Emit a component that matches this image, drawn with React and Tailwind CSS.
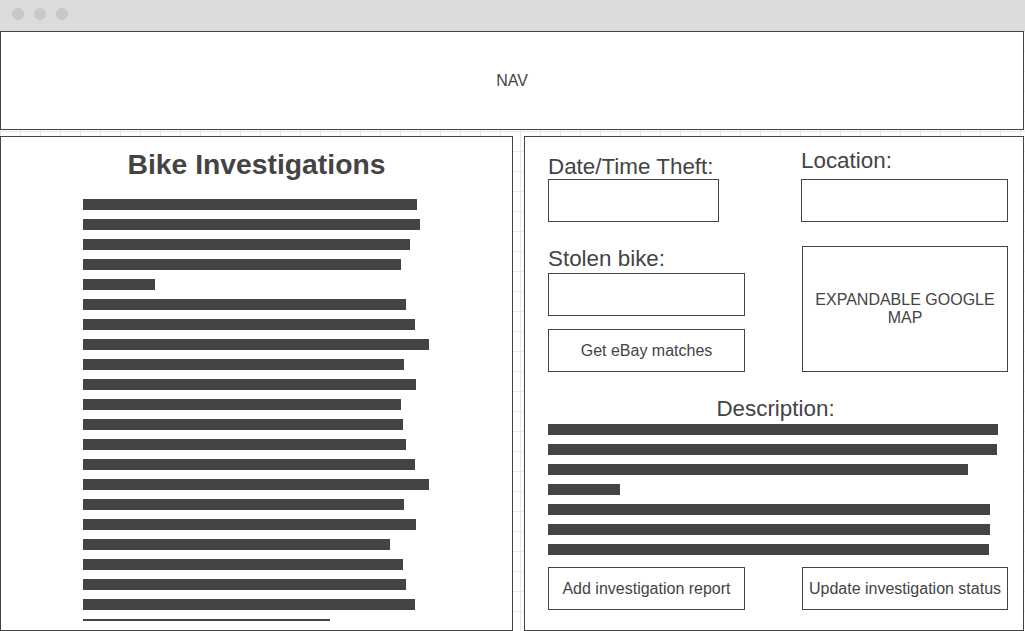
import React from "react";

const leftBars = [334, 337, 327, 318, 72, 323, 332, 346, 321, 333, 318, 320, 323, 332, 346, 321, 333, 307, 320, 323, 332];
const descBars = [450, 449, 420, 72, 442, 442, 441];

const Bar = ({ width, thin }) => (
  <div
    className={thin ? "h-[2px] bg-[#444444]" : "h-[11px] bg-[#444444]"}
    style={{ width: width + "px" }}
  />
);

const Box = ({ className, children }) => (
  <div className={"border border-[#444444] bg-white flex items-center justify-center text-center " + className}>
    {children}
  </div>
);

const App = () => {
  return (
    <div className="w-[1025px] h-[631px] overflow-hidden bg-white font-['Liberation_Sans',Arial,sans-serif] text-[#444444]">
      {/* window title bar */}
      <div className="h-[31px] bg-[#dcdcdc] flex items-start gap-[10px] pl-[12px] pt-[8px]">
        <div className="w-[12px] h-[12px] rounded-full bg-[#c8c8c8]" />
        <div className="w-[12px] h-[12px] rounded-full bg-[#c8c8c8]" />
        <div className="w-[12px] h-[12px] rounded-full bg-[#c8c8c8]" />
      </div>

      <div className="h-[600px] bg-white bg-[linear-gradient(to_right,#e8e8e8_1px,transparent_1px),linear-gradient(to_bottom,#e8e8e8_1px,transparent_1px)] bg-[size:20px_20px]">
        <div className="w-[1024px] flex flex-col gap-[6px]">
          {/* nav */}
          <div className="h-[99px] border border-[#444444] bg-white flex items-center justify-center text-[16px]">
            NAV
          </div>

          <div className="flex gap-[11px]">
            {/* left panel */}
            <div className="w-[513px] h-[495px] border border-[#444444] bg-white overflow-hidden">
              <h1 className="pt-[11px] text-center text-[28.3px] leading-[32px] font-bold">Bike Investigations</h1>
              <div className="mt-[19px] pl-[82px] flex flex-col gap-[9px]">
                {leftBars.map((w, i) => (
                  <Bar key={i} width={w} />
                ))}
                <Bar width={247} thin />
              </div>
            </div>

            {/* right panel */}
            <div className="w-[500px] h-[495px] border border-[#444444] bg-white pl-[23px] overflow-hidden">
              <div className="flex items-end pt-[11px]">
                <div className="w-[253px] flex flex-col">
                  <div className="text-[22.4px] leading-[26px] -mb-[1px]">Date/Time Theft:</div>
                  <Box className="w-[171px] h-[43px]" />
                </div>
                <div className="flex flex-col">
                  <div className="text-[22.4px] leading-[26px] mb-[5px]">Location:</div>
                  <Box className="w-[207px] h-[43px]" />
                </div>
              </div>

              <div className="flex items-start mt-[24px]">
                <div className="w-[254px] flex flex-col">
                  <div className="text-[22.4px] leading-[26px]">Stolen bike:</div>
                  <Box className="mt-[1px] w-[197px] h-[43px]" />
                  <Box className="mt-[13px] w-[197px] h-[43px] text-[16px]">Get eBay matches</Box>
                </div>
                <Box className="w-[206px] h-[126px] px-[6px] text-[16px] leading-[18px]">EXPANDABLE GOOGLE MAP</Box>
              </div>

              <div className="mt-[24px] w-[455px] text-center text-[22.4px] leading-[26px]">Description:</div>
              <div className="mt-[2px] flex flex-col gap-[9px]">
                {descBars.map((w, i) => (
                  <Bar key={i} width={w} />
                ))}
              </div>

              <div className="mt-[12px] flex">
                <Box className="w-[197px] h-[43px] text-[16px]">Add investigation report</Box>
                <Box className="ml-[57px] w-[206px] h-[43px] text-[16px] whitespace-nowrap">Update investigation status</Box>
              </div>
            </div>
          </div>
        </div>
      </div>
    </div>
  );
};

export default App;
